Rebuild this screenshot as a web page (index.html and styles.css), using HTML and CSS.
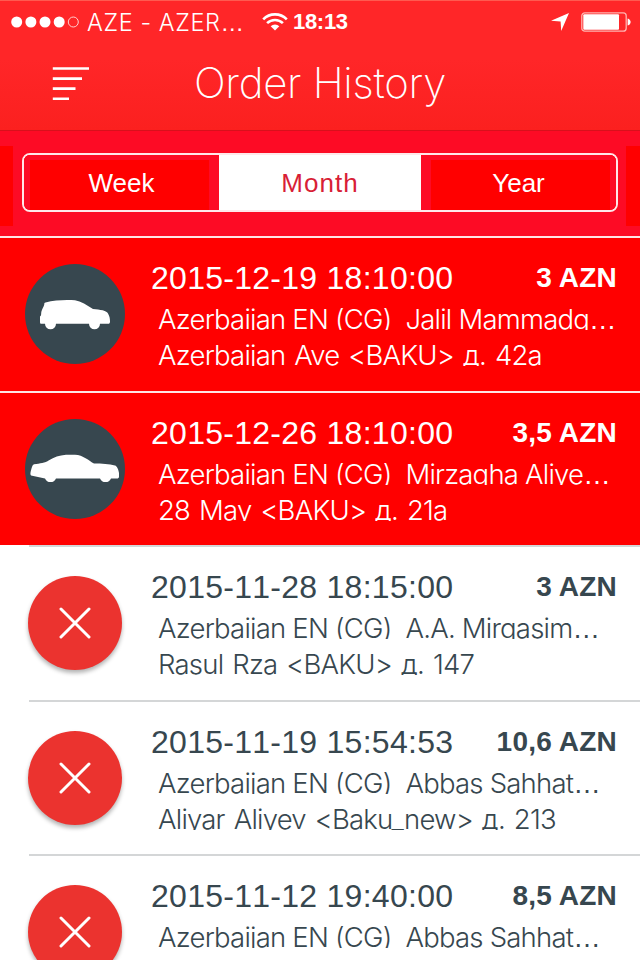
FILE: index.html
```html
<!DOCTYPE html>
<html lang="en">
<head>
    <meta charset="UTF-8">
    <meta name="viewport" content="width=device-width,initial-scale=1.0" />
    <title>Order History</title>
    <link rel="stylesheet" href="styles.css">
</head>
<body>
    <div class="page">
        <header class="header">
            <div class="status">
                <svg class="signal" width="68" height="12" viewBox="0 0 68 12" fill="#fff">
                    <circle cx="5.7" cy="6" r="5.5"/>
                    <circle cx="19.9" cy="6" r="5.5"/>
                    <circle cx="34" cy="6" r="5.5"/>
                    <circle cx="48.2" cy="6" r="5.5"/>
                    <circle cx="62.3" cy="6" r="5" fill="none" stroke="#ffd0d0"/>
                </svg>
                <span class="carrier">AZE - AZER<span class="more">…</span></span>
                <svg class="wifi" width="26" height="18" viewBox="0 0 26 18" fill="none" stroke="#fff" stroke-width="2.6">
                    <path d="M1.2 6.3a16.7 16.7 0 0 1 23.6 0"/>
                    <path d="M5.1 10.2a11.2 11.2 0 0 1 15.8 0"/>
                    <path d="M13 17.6l-4.3-4.3a6.1 6.1 0 0 1 8.6 0z" fill="#fff" stroke="none"/>
                </svg>
                <span class="time">18:13</span>
                <svg class="location" width="18" height="18" viewBox="0 0 18 18" fill="#fff">
                    <path d="M18 0L10.2 18 9.6 8.4 0 7.8z"/>
                </svg>
                <svg class="battery" width="50" height="20" viewBox="0 0 50 20">
                    <rect x=".8" y=".8" width="44.4" height="18.4" rx="3" fill="none" stroke="#ffb4b0" stroke-width="1.3"/>
                    <rect x="2.3" y="2.3" width="35.7" height="15.4" rx="1" fill="#fff"/>
                    <path d="M46.6 6.5c4 1 4 6 0 7z" fill="#fff"/>
                </svg>
            </div>
            <div class="titlebar">
                <svg class="menu" width="38" height="36" viewBox="0 0 38 36" stroke="#fff" stroke-width="2.6">
                    <path d="M.8 2.5H37M.8 12.6H30M.8 22.6H23.5M.8 32.7H17"/>
                </svg>
                <h1 class="title">Order History</h1>
            </div>
        </header>
        <nav class="filter">
            <div class="tabs">
                <a class="tab">Week</a>
                <a class="tab active">Month</a>
                <a class="tab">Year</a>
            </div>
        </nav>
        <ul class="orders">
            <li class="order done">
                <div class="icon">
                    <svg width="100" height="100" viewBox="0 0 100 100">
                        <circle cx="50" cy="50" r="50" fill="#37474f"/>
                        <path fill="#fff" d="M20.500 38.4C30 36 42 35.5 50 36.3c6 .9 12 5 18 8.7 7 .5 14 1.6 15 4.5 1.5 2.5 2 5 2 8 0 1.5-.5 2.3-2 2.300H75a5.500 5.500 0 0 1-11 0H31a5.500 5.500 0 0 1-11 0h-4.500L15 58.500v-6c1.500-1 1-2 1.300-4.500.6-3 2.500-5 3-7.500-.3-1 .2-1.800 1.200-2.100z"/>
                    </svg>
                </div>
                <div class="info">
                    <div class="top"><span class="date">2015-12-19 18:10:00</span><span class="price">3 AZN</span></div>
                    <div class="address">Azerbaijan EN (CG)&nbsp; Jalil Mammadg<span class="more">…</span></div>
                    <div class="address street">Azerbaijan Ave &lt;BAKU&gt; д. 42a</div>
                </div>
            </li>
            <li class="order done">
                <div class="icon">
                    <svg width="100" height="100" viewBox="0 0 100 100">
                        <circle cx="50" cy="50" r="50" fill="#37474f"/>
                        <path fill="#fff" d="M9 45.2c6-1 11-1 15-4 5-3 10-5 17-5.500h9c8 .3 14 6 19 8.800 8 0 15 .5 21 2 2 .6 3.500 4 4 7.500v4c0 .8-1 1.500-2 1.500h-6a6 6 0 0 1-11 0H31a6 6 0 0 1-11 0L6 56.500c-1-1.500-.5-3-.2-4.500C6.500 50 7 46 9 45.200z"/>
                    </svg>
                </div>
                <div class="info">
                    <div class="top"><span class="date">2015-12-26 18:10:00</span><span class="price">3,5 AZN</span></div>
                    <div class="address">Azerbaijan EN (CG)&nbsp; Mirzagha Aliye<span class="more">…</span></div>
                    <div class="address street">28 May &lt;BAKU&gt; д. 21a</div>
                </div>
            </li>
            <li class="order">
                <div class="icon">
                    <div class="cancel">
                        <svg width="32" height="32" viewBox="0 0 32 32" stroke="#fff" stroke-width="3" stroke-linecap="round"><path d="M2 2l28 28M30 2L2 30"/></svg>
                    </div>
                </div>
                <div class="info">
                    <div class="top"><span class="date">2015-11-28 18:15:00</span><span class="price">3 AZN</span></div>
                    <div class="address">Azerbaijan EN (CG)&nbsp; A.A. Mirgasim<span class="more">…</span></div>
                    <div class="address street">Rasul Rza &lt;BAKU&gt; д. 147</div>
                </div>
            </li>
            <li class="order">
                <div class="icon">
                    <div class="cancel">
                        <svg width="32" height="32" viewBox="0 0 32 32" stroke="#fff" stroke-width="3" stroke-linecap="round"><path d="M2 2l28 28M30 2L2 30"/></svg>
                    </div>
                </div>
                <div class="info">
                    <div class="top"><span class="date">2015-11-19 15:54:53</span><span class="price">10,6 AZN</span></div>
                    <div class="address">Azerbaijan EN (CG)&nbsp; Abbas Sahhat<span class="more">…</span></div>
                    <div class="address street">Aliyar Aliyev &lt;Baku_new&gt; д. 213</div>
                </div>
            </li>
            <li class="order">
                <div class="icon">
                    <div class="cancel">
                        <svg width="32" height="32" viewBox="0 0 32 32" stroke="#fff" stroke-width="3" stroke-linecap="round"><path d="M2 2l28 28M30 2L2 30"/></svg>
                    </div>
                </div>
                <div class="info">
                    <div class="top"><span class="date">2015-11-12 19:40:00</span><span class="price">8,5 AZN</span></div>
                    <div class="address">Azerbaijan EN (CG)&nbsp; Abbas Sahhat<span class="more">…</span></div>
                </div>
            </li>
        </ul>
    </div>
</body>
</html>
```

FILE: styles.css
```css
* {
    box-sizing: border-box;
}
body {
    margin: 0;
    background: #fff;
}
svg {
    display: block;
    flex: none;
}
.page {
    width: 640px;
    height: 960px;
    overflow: hidden;
    font-family: Inter, "Liberation Sans", sans-serif;
    color: #37474f;
}
.more {
    font-family: "Liberation Sans", Arial, sans-serif;
    line-height: 1;
}

.header {
    height: 131px;
    border-top: 1px solid #ff5a50;
    border-bottom: 1px solid #d8101c;
    background: linear-gradient(#ff2628 45%, #fb201f);
    color: #fff;
}
.status {
    display: flex;
    align-items: center;
    height: 42px;
    padding: 0 9px 0 11px;
    font-size: 23.5px;
    white-space: nowrap;
}
.carrier {
    width: 175px;
    padding-left: 8px;
    font-weight: 300;
    letter-spacing: .6px;
}
.wifi {
    margin-left: 8px;
}
.time {
    flex: 1;
    padding-left: 5px;
    font-family: "Liberation Sans", Arial, sans-serif;
    font-weight: bold;
    font-size: 22px;
    letter-spacing: -.3px;
}
.battery {
    margin-left: 12px;
}
.titlebar {
    display: flex;
    align-items: center;
    height: 82px;
    padding-left: 52px;
}
.title {
    flex: 1;
    margin: 0;
    padding: 0 0 3px 104px;
    font-size: 42px;
    font-weight: 250;
    letter-spacing: -.3px;
    white-space: nowrap;
}

.filter {
    height: 105px;
    padding: 22px 22px 0;
    background: linear-gradient(90deg, #f00 13px, #fd0b25 13px, #fd0b25 626px, #f00 626px) no-repeat 0 15px / 100% 80px #fd0b25;
}
.tabs {
    display: flex;
    height: 59px;
    border: 2px solid #ffe8ea;
    border-radius: 8px;
    overflow: hidden;
    background: #f00;
}
.tab {
    width: 195px;
    border: solid #fd0b25;
    border-width: 5px 10px 0 6px;
    padding-left: 4px;
    color: #fff;
    font-family: "Liberation Sans", Arial, sans-serif;
    font-size: 26px;
    line-height: 47px;
    text-align: center;
}
.tab.active {
    width: 202px;
    border-color: #fff;
    background: #fff;
    color: #d81e36;
    letter-spacing: 1px;
}
.tab:last-child {
    border-width: 5px 6px 0 10px;
    padding: 0 4px 0 0;
}

.orders {
    margin: 0;
    padding: 0;
    list-style: none;
}
.order {
    display: flex;
    height: 154.6px;
    padding-top: 24px;
    background: linear-gradient(#d4d6d7, #d4d6d7) no-repeat 29px 0 / 100% 2px;
}
.order.done {
    padding-top: 22px;
    border-top: 2px solid #ffe4e4;
    background: #f00;
    color: #fff;
}
.icon {
    flex: none;
    width: 151px;
    padding: 4px 0 0 25px;
}
.cancel {
    display: flex;
    align-items: center;
    justify-content: center;
    width: 94px;
    height: 94px;
    margin: 3px;
    border-radius: 50%;
    background: #eb332f;
    box-shadow: 0 3px 4px rgba(0, 0, 0, .3);
}
.info {
    flex: 1;
    min-width: 0;
    padding-right: 23px;
    white-space: nowrap;
}
.top {
    display: flex;
    justify-content: space-between;
    height: 45px;
    line-height: 36px;
}
.date {
    font-family: "Liberation Sans", Arial, sans-serif;
    font-size: 32px;
    font-kerning: none;
    letter-spacing: .27px;
}
.price {
    font-family: "Liberation Sans", Arial, sans-serif;
    font-size: 28px;
    font-weight: bold;
    letter-spacing: .2px;
}
/* short line box, descenders are cut off */
.address {
    height: 25px;
    margin-bottom: 11px;
    padding-left: 7px;
    overflow: hidden;
    font-size: 27.5px;
    font-weight: 300;
    line-height: 28px;
    letter-spacing: -.78px;
}
.street {
    word-spacing: 2px;
}
```
